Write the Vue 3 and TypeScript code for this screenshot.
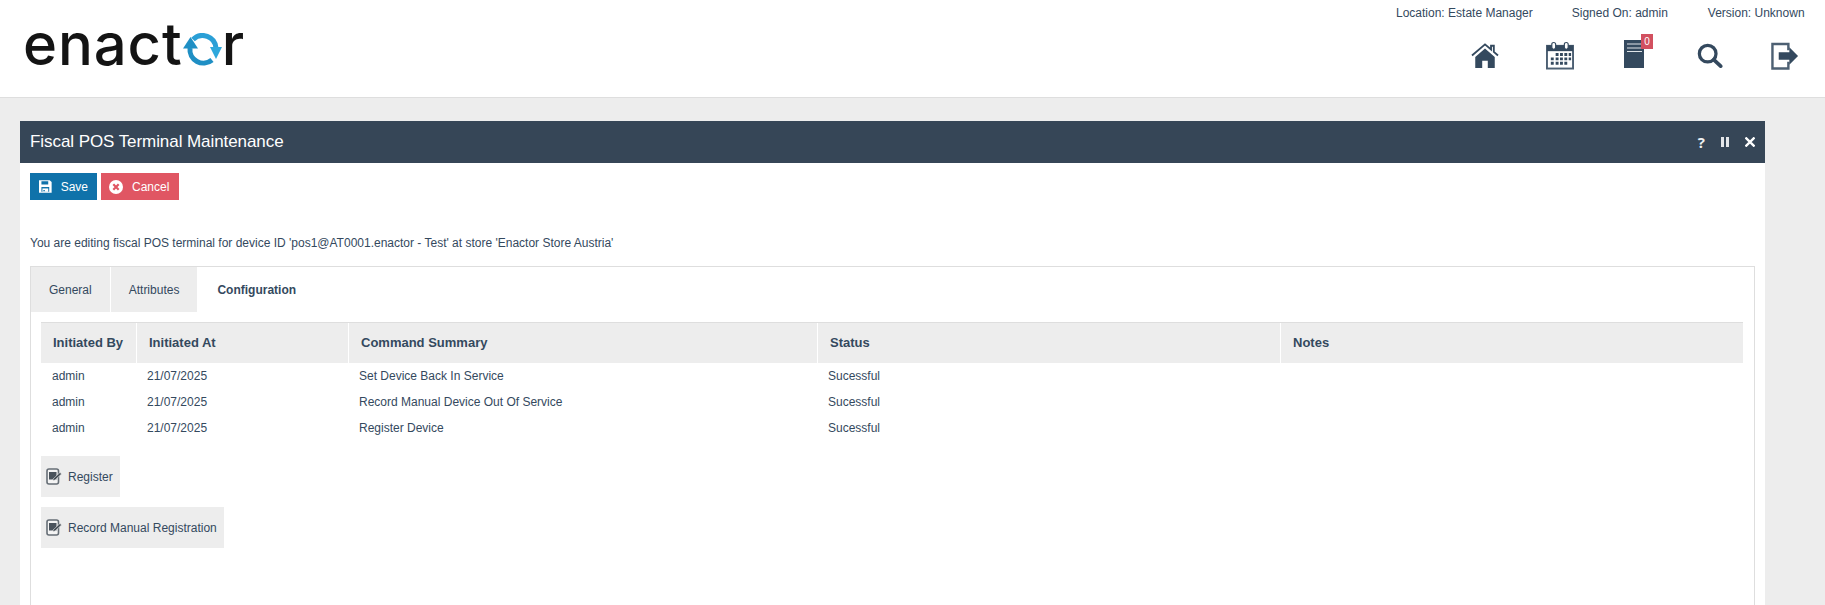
<script setup lang="ts">
const rows = [
  { by: 'admin', at: '21/07/2025', cmd: 'Set Device Back In Service', status: 'Sucessful' },
  { by: 'admin', at: '21/07/2025', cmd: 'Record Manual Device Out Of Service', status: 'Sucessful' },
  { by: 'admin', at: '21/07/2025', cmd: 'Register Device', status: 'Sucessful' },
]
const heads = ['Initiated By', 'Initiated At', 'Command Summary', 'Status', 'Notes']
const actions = ['Register', 'Record Manual Registration']
</script>

<template>
  <div class="page">
    <header class="top">
      <div class="logo">
        <span>enact</span>
        <svg class="logo-o" viewBox="0 0 39 33" width="39" height="33">
          <path d="M10 6.500 A13.500 13.500 0 0 1 33 15" fill="none" stroke="#2a9fd6" stroke-width="5" />
          <path d="M7 15 A13.500 13.500 0 0 0 29 27" fill="none" stroke="#1f8fc4" stroke-width="5" />
          <path d="M7.500 4 L15 15.500 L0 15.500 Z" fill="#1f8fc4" />
          <path d="M27 14 L39 14 L33 26 Z" fill="#2ea8dc" />
        </svg>
        <span>r</span>
      </div>
      <div class="top-right">
        <div class="meta">
          <span>Location: Estate Manager</span>
          <span class="m2">Signed On: admin</span>
          <span class="m3">Version: Unknown</span>
        </div>
        <div class="icons">
          <svg class="i-home" width="28" height="26" viewBox="0 0 30 28">
            <path d="M1 13.500 L15 1.500 L21.500 7 V3 H24.500 V9.600 L29 13.500" fill="none" stroke="#34495e" stroke-width="2" />
            <path d="M4.500 15 L15 6 L25.500 15 V27 H18 V19 H12 V27 H4.500 Z" fill="#34495e" />
          </svg>
          <svg class="i-cal" width="28" height="29" viewBox="0 0 29 29">
            <rect x="1" y="4.500" width="27" height="23.500" fill="#fff" stroke="#4d6073" stroke-width="2" />
            <rect x="1" y="4" width="27" height="6" fill="#34495e" />
            <rect x="6" y="1" width="4" height="7" rx="2" fill="#fff" stroke="#34495e" stroke-width="1.200" />
            <rect x="19" y="1" width="4" height="7" rx="2" fill="#fff" stroke="#34495e" stroke-width="1.200" />
            <path fill="#34495e" d="M10 12h3v3h-3zM14.500 12h3v3h-3zM19 12h3v3h-3zM23.500 12h2.500v3h-2.500zM5 16.500h3v3H5zM10 16.500h3v3h-3zM14.500 16.500h3v3h-3zM19 16.500h3v3h-3zM23.500 16.500h2.500v3h-2.500zM5 21h3v3H5zM10 21h3v3h-3zM14.500 21h3v3h-3zM19 21h3v3h-3z" />
          </svg>
          <div class="doc">
            <svg width="20" height="28" viewBox="0 0 20 28">
              <rect width="20" height="28" fill="#34495e" />
              <path d="M3 4h15M3 8h15M3 11.500h15" stroke="#dfe4e8" stroke-width="1.200" />
            </svg>
            <span class="badge">0</span>
          </div>
          <svg class="i-search" width="26" height="25" viewBox="0 0 28 27">
            <circle cx="11.500" cy="11.500" r="9" fill="none" stroke="#34495e" stroke-width="3.500" />
            <path d="M18 18 L25.500 25" stroke="#34495e" stroke-width="4" stroke-linecap="round" />
          </svg>
          <svg class="i-out" width="28" height="28" viewBox="0 0 29 28">
            <path d="M18 8 V1.500 H1.500 V27 H18 V20" fill="none" stroke="#4d6073" stroke-width="2.500" />
            <path d="M8 10 H19 V5 L28 14 L19 23 V18 H8 Z" fill="#34495e" />
          </svg>
        </div>
      </div>
    </header>

    <section class="panel">
      <div class="title-bar">
        <h1>Fiscal POS Terminal Maintenance</h1>
        <div class="win-controls">
          <span class="help">?</span>
          <svg width="8" height="10" viewBox="0 0 8 10"><path fill="#e4e7ea" d="M0 0h3v10H0zM5 0h3v10H5z" /></svg>
          <svg width="10" height="10" viewBox="0 0 10 10"><path d="M.5 .5 L9.500 9.500 M9.500 .5 L.5 9.500" stroke="#fff" stroke-width="2.300" /></svg>
        </div>
      </div>
      <div class="panel-body">
        <div class="toolbar">
          <button class="btn save">
            <svg width="13" height="13" viewBox="0 0 13 13">
              <path fill="#fff" d="M0 0h11l2 2v11H0z" />
              <path fill="#0f72aa" d="M2.500 1h7v3.500h-7zM2.500 7h8v5h-8z" />
              <path fill="#fff" d="M3.500 8.500h6v3.500h-6z" />
              <path fill="#0f72aa" d="M4.500 10h1.500v1.500H4.500z" />
            </svg>
            Save
          </button>
          <button class="btn cancel">
            <svg width="14" height="14" viewBox="0 0 14 14">
              <circle cx="7" cy="7" r="7" fill="#fff" />
              <path d="M4.300 4.300 L9.700 9.700 M9.700 4.300 L4.300 9.700" stroke="#e05663" stroke-width="2.200" />
            </svg>
            Cancel
          </button>
        </div>
        <p class="intro">You are editing fiscal POS terminal for device ID 'pos1@AT0001.enactor - Test' at store 'Enactor Store Austria'</p>
        <div class="tabs-box">
          <div class="tabs">
            <span class="tab">General</span>
            <span class="tab">Attributes</span>
            <span class="tab active">Configuration</span>
          </div>
          <div class="tab-body">
            <table>
              <colgroup>
                <col class="c1" /><col class="c2" /><col class="c3" /><col class="c4" /><col />
              </colgroup>
              <thead>
                <tr><th v-for="h in heads" :key="h">{{ h }}</th></tr>
              </thead>
              <tbody>
                <tr v-for="r in rows" :key="r.cmd">
                  <td>{{ r.by }}</td>
                  <td>{{ r.at }}</td>
                  <td>{{ r.cmd }}</td>
                  <td>{{ r.status }}</td>
                  <td></td>
                </tr>
              </tbody>
            </table>
            <div class="actions">
              <div v-for="a in actions" :key="a">
                <button class="action">
                  <svg width="16" height="17" viewBox="0 0 16 17">
                    <rect x="1" y="1" width="11.500" height="15" rx="2" fill="#f4f4f4" stroke="#666e76" stroke-width="1.600" />
                    <rect x="3" y="4" width="7.500" height="7.500" fill="#4a535c" />
                    <path d="M7 11 L14 4.500 L15.500 6 L9 12 L7 12.500 Z" fill="#3f4850" stroke="#ededed" stroke-width="0.600" />
                  </svg>
                  {{ a }}
                </button>
              </div>
            </div>
          </div>
        </div>
      </div>
    </section>
  </div>
</template>

<style>
html, body { margin: 0; background: #ededed; }
</style>

<style scoped>
.page {
  height: 605px;
  overflow: hidden;
  background: #ededed;
  font-family: "Liberation Sans", Arial, sans-serif;
  font-size: 12px;
  color: #34495e;
}
.top {
  height: 97px;
  background: #fff;
  border-bottom: 1px solid #dedede;
  display: flex;
  justify-content: space-between;
}
.logo {
  display: flex;
  align-items: center;
  height: 96px;
  padding-left: 23px;
  font-family: "Inter", sans-serif;
  font-weight: 500;
  font-size: 58px;
  letter-spacing: 0.900px;
  color: #141414;
  line-height: 1;
}
.logo span { position: relative; top: -4px; }
.logo-o { margin: 2px 0 0 0; }
.top-right {
  width: 429px;
  box-sizing: border-box;
  padding: 6px 20px 0 0;
  display: flex;
  flex-direction: column;
}
.meta {
  display: flex;
  line-height: 14px;
  white-space: nowrap;
}
.m2 { margin-left: 39px; }
.m3 { margin-left: 40px; }
.icons {
  display: flex;
  align-items: center;
  justify-content: flex-end;
  padding: 21px 6px 0 0;
}
.i-cal { margin-left: 47px; }
.doc { position: relative; margin: -4px 0 0 50px; }
.doc svg { display: block; }
.i-search { margin-left: 53px; }
.i-out { margin-left: 48px; }
.badge {
  position: absolute;
  left: 17px;
  top: -6px;
  width: 12px;
  height: 15px;
  background: #d2505f;
  color: #fff;
  font-size: 10px;
  line-height: 15px;
  text-align: center;
}
.panel {
  margin: 23px 60px 0 20px;
  background: #fff;
}
.title-bar {
  height: 42px;
  background: #364657;
  display: flex;
  align-items: center;
  justify-content: space-between;
  padding: 0 10px;
}
h1 {
  margin: 0;
  font-size: 17px;
  letter-spacing: -0.07px;
  font-weight: 400;
  color: #fff;
}
.win-controls {
  display: flex;
  align-items: center;
  gap: 16px;
}
.help {
  color: #eef0f2;
  font-family: "Open Sans", sans-serif;
  font-weight: 700;
  font-size: 15px;
  line-height: 12px;
}
.panel-body { padding: 10px 10px 0; }
.toolbar { display: flex; gap: 4px; }
.btn {
  height: 27px;
  border: 0;
  padding: 0 9px;
  display: flex;
  align-items: center;
  gap: 9px;
  color: #fff;
  font: 12px "Liberation Sans", Arial, sans-serif;
}
.save { background: #0f72aa; width: 67px; }
.cancel { background: #e05663; width: 78px; padding: 0 8px; }
.intro { margin: 36px 0 16px; line-height: 14px; }
.tabs-box {
  border: 1px solid #dedede;
  height: 600px;
}
.tabs { display: flex; height: 45px; gap: 1px; }
.tab {
  background: #ededed;
  padding: 0 18px;
  display: flex;
  align-items: center;
}
.tab.active { background: #fff; font-weight: 700; margin-left: 1px; }
.tab-body { padding: 10px 10px 0; }
table {
  width: 1702px;
  border-collapse: separate;
  border-spacing: 0;
  table-layout: fixed;
  border-top: 1px solid #dedede;
}
.c1 { width: 96px; }
.c2 { width: 212px; }
.c3 { width: 469px; }
.c4 { width: 463px; }
th {
  height: 39px;
  padding: 0 0 1px 12px;
  background: #ededed;
  border-right: 1px solid #fff;
  text-align: left;
  font-size: 13px;
  font-weight: 700;
  white-space: nowrap;
}
th:last-child { border-right: 0; }
td {
  height: 26px;
  padding: 0 10px;
  line-height: 26px;
}
td:first-child { padding-left: 11px; }
.actions { margin-top: 15px; display: flex; flex-direction: column; gap: 10px; }
.action {
  height: 41px;
  padding: 0 7px 0 5px;
  border: 0;
  background: #ededed;
  display: inline-flex;
  align-items: center;
  gap: 6px;
  color: #34495e;
  font: 12px "Liberation Sans", Arial, sans-serif;
}
</style>
